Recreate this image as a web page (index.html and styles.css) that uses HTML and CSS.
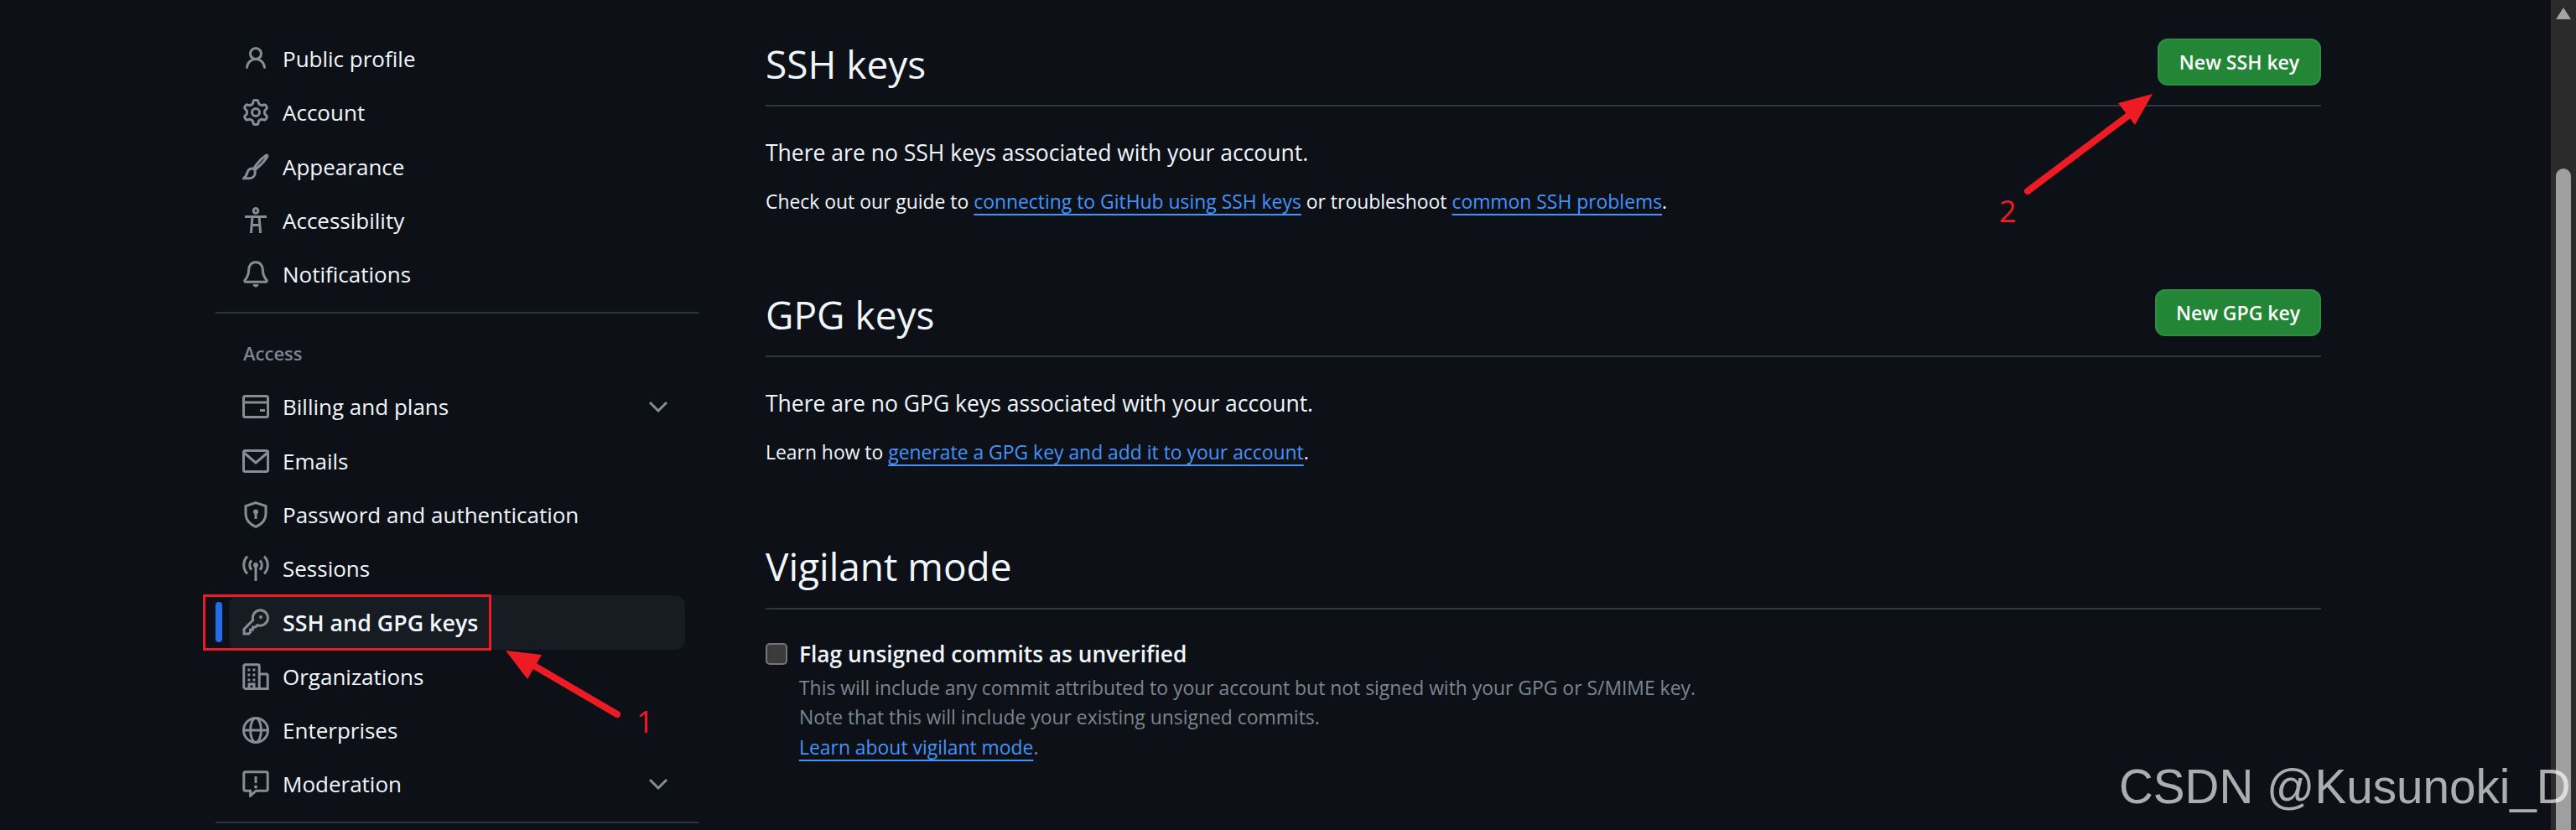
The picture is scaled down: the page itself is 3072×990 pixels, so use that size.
FILE: index.html
```html
<!DOCTYPE html>
<html lang="en">
<head>
    <meta charset="UTF-8">
    <title>SSH and GPG keys</title>
    <link rel="stylesheet" href="styles.css">
</head>
<body>
    <div class="page">
        <nav class="sidebar">
            <ul class="nav-list">
                <li class="nav-item"><svg class="icon" viewBox="0 0 16 16"><path class="fill" d="M10.561 8.073a6.005 6.005 0 0 1 3.432 5.142.75.75 0 1 1-1.498.07 4.5 4.5 0 0 0-8.99 0 .75.75 0 1 1-1.498-.07 6.004 6.004 0 0 1 3.431-5.142 3.999 3.999 0 1 1 5.123 0ZM10.5 5a2.5 2.5 0 1 0-5 0 2.5 2.5 0 0 0 5 0Z"/></svg>Public profile</li>
                <li class="nav-item"><svg class="icon" viewBox="0 0 16 16"><path class="fill" d="M8 0a8.2 8.2 0 0 1 .701.031C9.444.095 9.99.645 10.16 1.29l.288 1.107c.018.066.079.158.212.224.231.114.454.243.668.386.123.082.233.09.299.071l1.103-.303c.644-.176 1.392.021 1.82.63.27.385.506.792.704 1.218.315.675.111 1.422-.364 1.891l-.814.806c-.049.048-.098.147-.088.294.016.257.016.515 0 .772-.01.147.038.246.088.294l.814.806c.475.469.679 1.216.364 1.891a7.977 7.977 0 0 1-.704 1.217c-.428.61-1.176.807-1.82.63l-1.102-.302c-.067-.019-.177-.011-.3.071a5.909 5.909 0 0 1-.668.386c-.133.066-.194.158-.211.224l-.29 1.106c-.168.646-.715 1.196-1.458 1.26a8.006 8.006 0 0 1-1.402 0c-.743-.064-1.289-.614-1.458-1.26l-.289-1.106c-.018-.066-.079-.158-.212-.224a5.738 5.738 0 0 1-.668-.386c-.123-.082-.233-.09-.299-.071l-1.103.303c-.644.176-1.392-.021-1.82-.63a8.12 8.12 0 0 1-.704-1.218c-.315-.675-.111-1.422.363-1.891l.815-.806c.05-.048.098-.147.088-.294a6.214 6.214 0 0 1 0-.772c.01-.147-.038-.246-.088-.294l-.815-.806C.635 6.045.431 5.298.746 4.623a7.92 7.92 0 0 1 .704-1.217c.428-.61 1.176-.807 1.82-.63l1.102.302c.067.019.177.011.3-.071.214-.143.437-.272.668-.386.133-.066.194-.158.211-.224l.29-1.106C6.009.645 6.556.095 7.299.03 7.53.01 7.764 0 8 0Zm-.571 1.525c-.036.003-.108.036-.137.146l-.289 1.105c-.147.561-.549.967-.998 1.189-.173.086-.34.183-.5.29-.417.278-.97.423-1.529.27l-1.103-.303c-.109-.03-.175.016-.195.045-.22.312-.412.644-.573.99-.014.031-.021.11.059.19l.815.806c.411.406.562.957.53 1.456a4.709 4.709 0 0 0 0 .582c.032.499-.119 1.05-.53 1.456l-.815.806c-.081.08-.073.159-.059.19.162.346.353.677.573.989.02.03.085.076.195.046l1.102-.303c.56-.153 1.113-.008 1.53.27.161.107.328.204.501.29.447.222.85.629.997 1.189l.289 1.105c.029.109.101.143.137.146a6.6 6.6 0 0 0 1.142 0c.036-.003.108-.036.137-.146l.289-1.105c.147-.561.549-.967.998-1.189.173-.086.34-.183.5-.29.417-.278.97-.423 1.529-.27l1.103.303c.109.029.175-.016.195-.045.22-.313.411-.644.573-.99.014-.031.021-.11-.059-.19l-.815-.806c-.411-.406-.562-.957-.53-1.456a4.709 4.709 0 0 0 0-.582c-.032-.499.119-1.05.53-1.456l.815-.806c.081-.08.073-.159.059-.19a6.464 6.464 0 0 0-.573-.989c-.02-.03-.085-.076-.195-.046l-1.102.303c-.56.153-1.113.008-1.53-.27a4.44 4.44 0 0 0-.501-.29c-.447-.222-.85-.629-.997-1.189l-.289-1.105c-.029-.11-.101-.143-.137-.146a6.6 6.6 0 0 0-1.142 0ZM11 8a3 3 0 1 1-6 0 3 3 0 0 1 6 0ZM9.5 8a1.5 1.5 0 1 0-3.001.001A1.5 1.5 0 0 0 9.5 8Z"/></svg>Account</li>
                <li class="nav-item"><svg class="icon" viewBox="0 0 16 16"><path d="M6.700 9.200C8.400 6.400 11.400 3 14 1.200c.7-.4 1.200.1.8.8C13.400 4.600 10 7.800 7.400 9.900ZM6.700 9.200C5.200 8.600 3.600 9.400 3.100 11c-.4 1.400-.9 2.800-2.300 3.900h3.200c2.200 0 3.700-1.500 3.600-3.500 0-.6-.1-1.100-.2-1.500"/></svg>Appearance</li>
                <li class="nav-item"><svg class="icon" viewBox="0 0 16 16"><circle cx="8" cy="2.200" r="1.400"/><path d="M1.500 5.700h13M6 5.700 5.200 15.500M10 5.700l.8 9.800M5.600 10.800h4.800"/></svg>Accessibility</li>
                <li class="nav-item"><svg class="icon" viewBox="0 0 16 16"><path d="M8 .9C5.400.9 3.800 3 3.800 5.600c0 3-1.300 4.800-2.300 6-.3.4 0 1 .5 1h12c.5 0 .8-.6.5-1-1-1.200-2.300-3-2.300-6C12.200 3 10.600.9 8 .9Z"/><path class="fill" d="M6.300 14h3.400a1.700 1.700 0 0 1-3.400 0Z"/></svg>Notifications</li>
            </ul>
            <div class="nav-divider"></div>
            <div class="nav-heading">Access</div>
            <ul class="nav-list">
                <li class="nav-item"><svg class="icon" viewBox="0 0 16 16"><rect x=".75" y="1.750" width="14.500" height="12.500" rx="1"/><path d="M1 5.500h14"/><path class="fill" d="M10.500 9.500h3v1.500h-3z"/></svg>Billing and plans<svg class="chevron" viewBox="0 0 16 16"><path d="M3 5.500 8 10.500l5-5"/></svg></li>
                <li class="nav-item"><svg class="icon" viewBox="0 0 16 16"><rect x=".75" y="1.750" width="14.500" height="12.500" rx="1"/><path d="M1 3l7 6 7-6"/></svg>Emails</li>
                <li class="nav-item"><svg class="icon" viewBox="0 0 16 16"><path d="M8 .8 14 2.800v4.700c0 3.700-2.600 6.200-6 7.700-3.400-1.500-6-4-6-7.700V2.800Z"/><circle class="fill" cx="8" cy="6.300" r="1.500"/><path class="fill" d="M7.250 7h1.500v3.500h-1.500z"/></svg>Password and authentication</li>
                <li class="nav-item"><svg class="icon" viewBox="0 0 16 16"><circle class="fill" cx="8" cy="6" r="1.500"/><path d="M8 7v8.500M5.500 3.200a4 4 0 0 0 0 5.600M10.500 3.200a4 4 0 0 1 0 5.600M3 .8a7.400 7.400 0 0 0 0 10.400M13 .8a7.400 7.400 0 0 1 0 10.400"/></svg>Sessions</li>
                <li class="nav-item active"><span class="active-bar"></span><svg class="icon" viewBox="0 0 16 16"><path d="M10.500.9a4.600 4.600 0 1 1-1.500 8.900L7.800 11H6.300v1.500H4.800V14l-1 1H1v-2.800l5.400-5.400A4.600 4.600 0 0 1 10.500.9Z"/><circle class="fill" cx="11" cy="5" r="1"/></svg>SSH and GPG keys</li>
                <li class="nav-item"><svg class="icon" viewBox="0 0 16 16"><path d="M.9 15.200V1.700C.9 1.200 1.200.9 1.700.9h7.600c.5 0 .8.3.8.8v13.500M10.100 6.500h4.100c.5 0 .9.4.9.9v7.800h-14M4 15v-2.500h3V15"/><path class="fill" d="M3.200 3.200h1.500v1.500H3.200zM6.200 3.200h1.500v1.500H6.200zM3.200 6.200h1.500v1.500H3.200zM6.200 6.200h1.500v1.500H6.200zM3.200 9.200h1.500v1.500H3.200zM6.200 9.200h1.500v1.500H6.200z"/></svg>Organizations</li>
                <li class="nav-item"><svg class="icon" viewBox="0 0 16 16"><circle cx="8" cy="8" r="7.250"/><ellipse cx="8" cy="8" rx="3.200" ry="7.250"/><path d="M1 8h14"/></svg>Enterprises</li>
                <li class="nav-item"><svg class="icon" viewBox="0 0 16 16"><path d="M1.700.9h12.600c.5 0 .8.3.8.8v9.600c0 .5-.3.8-.8.8H8.200l-3.400 3V12.100H1.700c-.5 0-.8-.3-.8-.8V1.700C.9 1.200 1.200.9 1.700.9Z"/><path d="M8 3.500v4"/><circle class="fill" cx="8" cy="9.700" r="1"/></svg>Moderation<svg class="chevron" viewBox="0 0 16 16"><path d="M3 5.500 8 10.500l5-5"/></svg></li>
            </ul>
            <div class="nav-divider"></div>
        </nav>

        <main class="content">
            <section class="section">
                <div class="section-head">
                    <h2>SSH keys</h2>
                    <button class="btn">New SSH key</button>
                </div>
                <p class="lead">There are no SSH keys associated with your account.</p>
                <p class="small">Check out our guide to <a href="#">connecting to GitHub using SSH keys</a> or troubleshoot <a href="#">common SSH problems</a>.</p>
            </section>
            <section class="section">
                <div class="section-head">
                    <h2>GPG keys</h2>
                    <button class="btn btn-wide">New GPG key</button>
                </div>
                <p class="lead">There are no GPG keys associated with your account.</p>
                <p class="small">Learn how to <a href="#">generate a GPG key and add it to your account</a>.</p>
            </section>
            <section class="section">
                <div class="section-head tall">
                    <h2>Vigilant mode</h2>
                </div>
                <div class="check-row">
                    <span class="checkbox"></span>
                    <div>
                        <div class="check-label">Flag unsigned commits as unverified</div>
                        <div class="note">This will include any commit attributed to your account but not signed with your GPG or S/MIME key.</div>
                        <div class="note">Note that this will include your existing unsigned commits.</div>
                        <div class="note"><a href="#">Learn about vigilant mode</a>.</div>
                    </div>
                </div>
            </section>
        </main>

        <div class="scrollbar">
            <span class="scroll-up"></span>
            <span class="scroll-thumb"></span>
        </div>
    </div>

    <!-- red annotations drawn over the screenshot -->
    <div class="mark-box"></div>
    <svg class="marks" viewBox="0 0 3072 990">
        <path class="mark-line" d="M630 790 736 852"/>
        <polygon class="mark-head" points="603,776 646,781 629,810"/>
        <path class="mark-line" d="M2538 138 2418 228"/>
        <polygon class="mark-head" points="2567,112 2526,123 2546,149"/>
    </svg>
    <span class="mark-num num-one">1</span>
    <span class="mark-num num-two">2</span>
    <div class="watermark">CSDN @Kusunoki_D</div>
</body>
</html>
```

FILE: styles.css
```css
* {
    box-sizing: border-box;
}
body {
    margin: 0;
    background-color: #0d1117;
    color: #f0f6fc;
    font-family: "Open Sans", "Noto Sans", sans-serif;
    overflow: hidden;
}
.page {
    display: flex;
    height: 990px;
    overflow: hidden;
    padding-left: 257px;
}

/* sidebar */
.sidebar {
    width: 576px;
    padding-top: 38px;
    flex-shrink: 0;
}
.nav-list {
    list-style: none;
    margin: 0;
    padding: 0;
}
.nav-item {
    position: relative;
    display: flex;
    align-items: center;
    gap: 16px;
    height: 64.25px;
    padding: 0 32px 0 32px;
    font-size: 26px;
}
.nav-item.active {
    margin: 0 16px;
    padding-left: 16px;
    padding-right: 8px;
    background-color: #171b22;
    border-radius: 12px;
    font-size: 26.8px;
    font-weight: 600;
}
.active-bar {
    position: absolute;
    left: -16px;
    top: 8px;
    width: 8px;
    height: 48px;
    border-radius: 4px;
    background-color: #1f6feb;
}
.icon,
.chevron {
    flex-shrink: 0;
    fill: none;
    stroke: #858d97;
    stroke-width: 1.5;
}
.icon {
    width: 32px;
    height: 32px;
}
.chevron {
    width: 32px;
    height: 32px;
    margin-left: auto;
}
.icon .fill {
    fill: #858d97;
    stroke: none;
}
.nav-divider {
    height: 2px;
    margin-top: 13px;
    background-color: #30363d;
}
.nav-heading {
    height: 68px;
    padding: 31px 0 0 33px;
    font-size: 22px;
    line-height: 32px;
    font-weight: 600;
    color: #7d8590;
    margin-bottom: 11px;
}

/* main column */
.content {
    width: 1855px;
    margin-left: 80px;
    padding-top: 46px;
    flex-shrink: 0;
}
.section {
    margin-bottom: 86px;
}
.section-head {
    display: flex;
    align-items: center;
    justify-content: space-between;
    height: 81px;
    padding-bottom: 24px;
    border-bottom: 2px solid #30363d;
}
.section-head.tall {
    height: 83px;
}
h2 {
    margin: 4px 0 0;
    font-size: 46px;
    line-height: 60px;
    font-weight: 400;
}
.btn {
    width: 195px;
    height: 56px;
    padding: 0;
    font-family: inherit;
    font-size: 23px;
    font-weight: 600;
    color: #fff;
    background-color: #238636;
    border: 2px solid #2e8f44;
    border-radius: 12px;
}
.btn-wide {
    width: 198px;
}
.lead {
    margin: 34px 0 0;
    font-size: 26.5px;
    line-height: 42px;
}
.small {
    margin: 20px 0 0;
    font-size: 22.9px;
    line-height: 36px;
}
a {
    color: #4493f8;
    text-decoration: underline;
    text-decoration-thickness: 2px;
    text-underline-offset: 6px;
}
.check-row {
    display: flex;
    gap: 14px;
    margin-top: 30px;
}
.checkbox {
    width: 26px;
    height: 26px;
    margin-top: 10px;
    flex-shrink: 0;
    background-color: #3b3b3b;
    border: 2px solid #767676;
    border-radius: 5px;
}
.check-label {
    font-size: 26.3px;
    line-height: 46px;
    font-weight: 600;
}
.note {
    font-size: 22.9px;
    line-height: 35.3px;
    color: #7d8590;
}

/* scrollbar */
.scrollbar {
    position: relative;
    margin-left: auto;
    width: 30px;
    flex-shrink: 0;
    background-color: #2b2b2b;
}
.scroll-up {
    position: absolute;
    left: 6px;
    top: 9px;
    width: 0;
    height: 0;
    border-left: 9px solid transparent;
    border-right: 9px solid transparent;
    border-bottom: 14px solid #a3a3a3;
}
.scroll-thumb {
    position: absolute;
    left: 6px;
    top: 201px;
    bottom: -20px;
    width: 18px;
    border-radius: 9px;
    background-color: #9f9f9f;
}

/* annotations */
.mark-box {
    position: absolute;
    left: 242px;
    top: 709px;
    width: 344px;
    height: 67px;
    border: 3px solid #ed1c24;
}
.marks {
    position: absolute;
    left: 0;
    top: 0;
    width: 3072px;
    height: 990px;
}
.mark-line {
    fill: none;
    stroke: #ed1c24;
    stroke-width: 8;
    stroke-linecap: round;
}
.mark-head {
    fill: #ed1c24;
}
.mark-num {
    position: absolute;
    font-size: 36px;
    line-height: 40px;
    color: #ed1c24;
}
.num-one {
    left: 759px;
    top: 841px;
}
.num-two {
    left: 2384px;
    top: 232px;
}
.watermark {
    position: absolute;
    left: 2527px;
    top: 906px;
    font-family: "Liberation Sans", Arial, sans-serif;
    font-size: 56.6px;
    line-height: 66px;
    white-space: nowrap;
    color: rgba(255, 255, 255, 0.66);
}
```
